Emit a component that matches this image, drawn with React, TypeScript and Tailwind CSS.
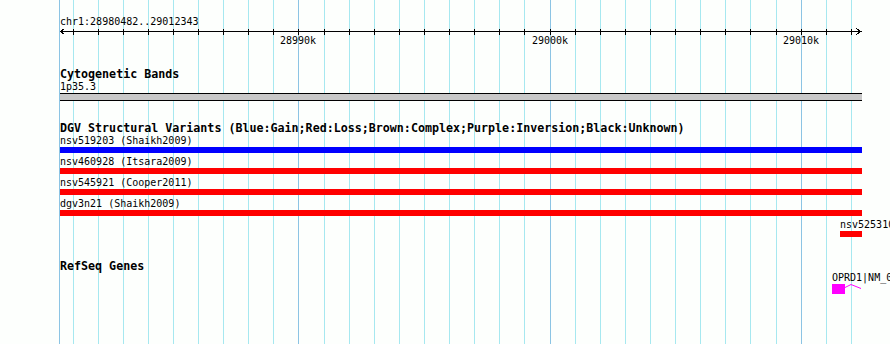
const START = 28980482;
const END = 29012343;
const LEFT = 60;
const WIDTH = 800;

const toX = (p: number) => Math.floor(LEFT + ((p - START) * WIDTH) / (END - START));

const ticks: { x: number; major: boolean; label?: string }[] = [];
for (let p = 28981000; p <= 29012000; p += 1000) {
  const major = p % 10000 === 0;
  ticks.push({ x: toX(p), major, label: major ? `${p / 1000}k` : undefined });
}

const variants = [
  { name: "nsv519203 (Shaikh2009)", color: "bg-[#0000ff]", offset: 0 },
  { name: "nsv460928 (Itsara2009)", color: "bg-[#ff0000]", offset: 0 },
  { name: "nsv545921 (Cooper2011)", color: "bg-[#ff0000]", offset: 0 },
  { name: "dgv3n21 (Shaikh2009)", color: "bg-[#ff0000]", offset: 0 },
  { name: "nsv525310 (Itsara2009)", color: "bg-[#ff0000]", offset: 780 },
];

function Grid() {
  return (
    <svg className="absolute inset-0" width={890} height={344} shapeRendering="crispEdges">
      <line x1={59.5} x2={59.5} y1={0} y2={344} stroke="#8cc4e4" />
      {ticks.map((t) => (
        <line
          key={t.x}
          x1={t.x + 0.5}
          x2={t.x + 0.5}
          y1={0}
          y2={344}
          stroke={t.major ? "#8cc4e4" : "#a6e8f0"}
        />
      ))}
    </svg>
  );
}

function Ruler() {
  return (
    <div className="relative h-[40px]">
      <svg width={802} height={8} shapeRendering="crispEdges" className="block">
        <line x1={0} x2={802} y1={3.5} y2={3.5} stroke="#000" />
        <polyline points="4.5,0.5 0.5,3.5 4.5,6.5" fill="none" stroke="#000" />
        <polyline points="796.5,0.5 800.5,3.5 796.5,6.5" fill="none" stroke="#000" />
        {ticks.map((t) => (
          <line key={t.x} x1={t.x - LEFT + 0.5} x2={t.x - LEFT + 0.5} y1={1} y2={7} stroke="#000" />
        ))}
      </svg>
      {ticks
        .filter((t) => t.label)
        .map((t) => (
          <span
            key={t.x}
            className="absolute top-[6px] text-[10px] leading-[13px] whitespace-nowrap"
            style={{ left: t.x - LEFT - 18 }}
          >
            {t.label}
          </span>
        ))}
    </div>
  );
}

function Title({ children }: { children: React.ReactNode }) {
  return <div className="text-[11.67px] leading-[12px] font-bold whitespace-nowrap">{children}</div>;
}

export default function App() {
  return (
    <div className="relative w-[890px] h-[344px] overflow-hidden bg-[#fdfffd] text-black font-['DejaVu_Sans_Mono',monospace]">
      <Grid />
      <div className="relative pl-[60px] pt-[15px] w-[862px]">
        <div className="text-[10px] leading-[13px]">chr1:28980482..29012343</div>
        <Ruler />

        <Title>Cytogenetic Bands</Title>
        <div className="text-[10px] leading-[13px]">1p35.3</div>
        <div className="h-[8px] border-y border-black bg-[#c8c8c8]" />

        <div className="mt-[21px]">
          <Title>
            DGV Structural Variants (Blue:Gain;Red:Loss;Brown:Complex;Purple:Inversion;Black:Unknown)
          </Title>
        </div>
        <div className="flex flex-col gap-[2px]">
          {variants.map((v) => (
            <div key={v.name} style={{ paddingLeft: v.offset }}>
              <div className="text-[10px] leading-[13px] whitespace-nowrap">{v.name}</div>
              <div className={`h-[6px] ${v.color}`} />
            </div>
          ))}
        </div>

        <div className="mt-[23px]">
          <Title>RefSeq Genes</Title>
        </div>
        <div className="ml-[772px] mt-[0px]">
          <div className="text-[10px] leading-[12px] whitespace-nowrap">OPRD1|NM_000911</div>
          <svg width={32} height={10} className="block" shapeRendering="crispEdges">
            <rect x={0} y={0} width={13} height={10} fill="#ff00ff" />
            <polyline points="13,3.5 19,0.5 29,4.5" fill="none" stroke="#ff00ff" shapeRendering="auto" />
          </svg>
        </div>
      </div>
    </div>
  );
}
